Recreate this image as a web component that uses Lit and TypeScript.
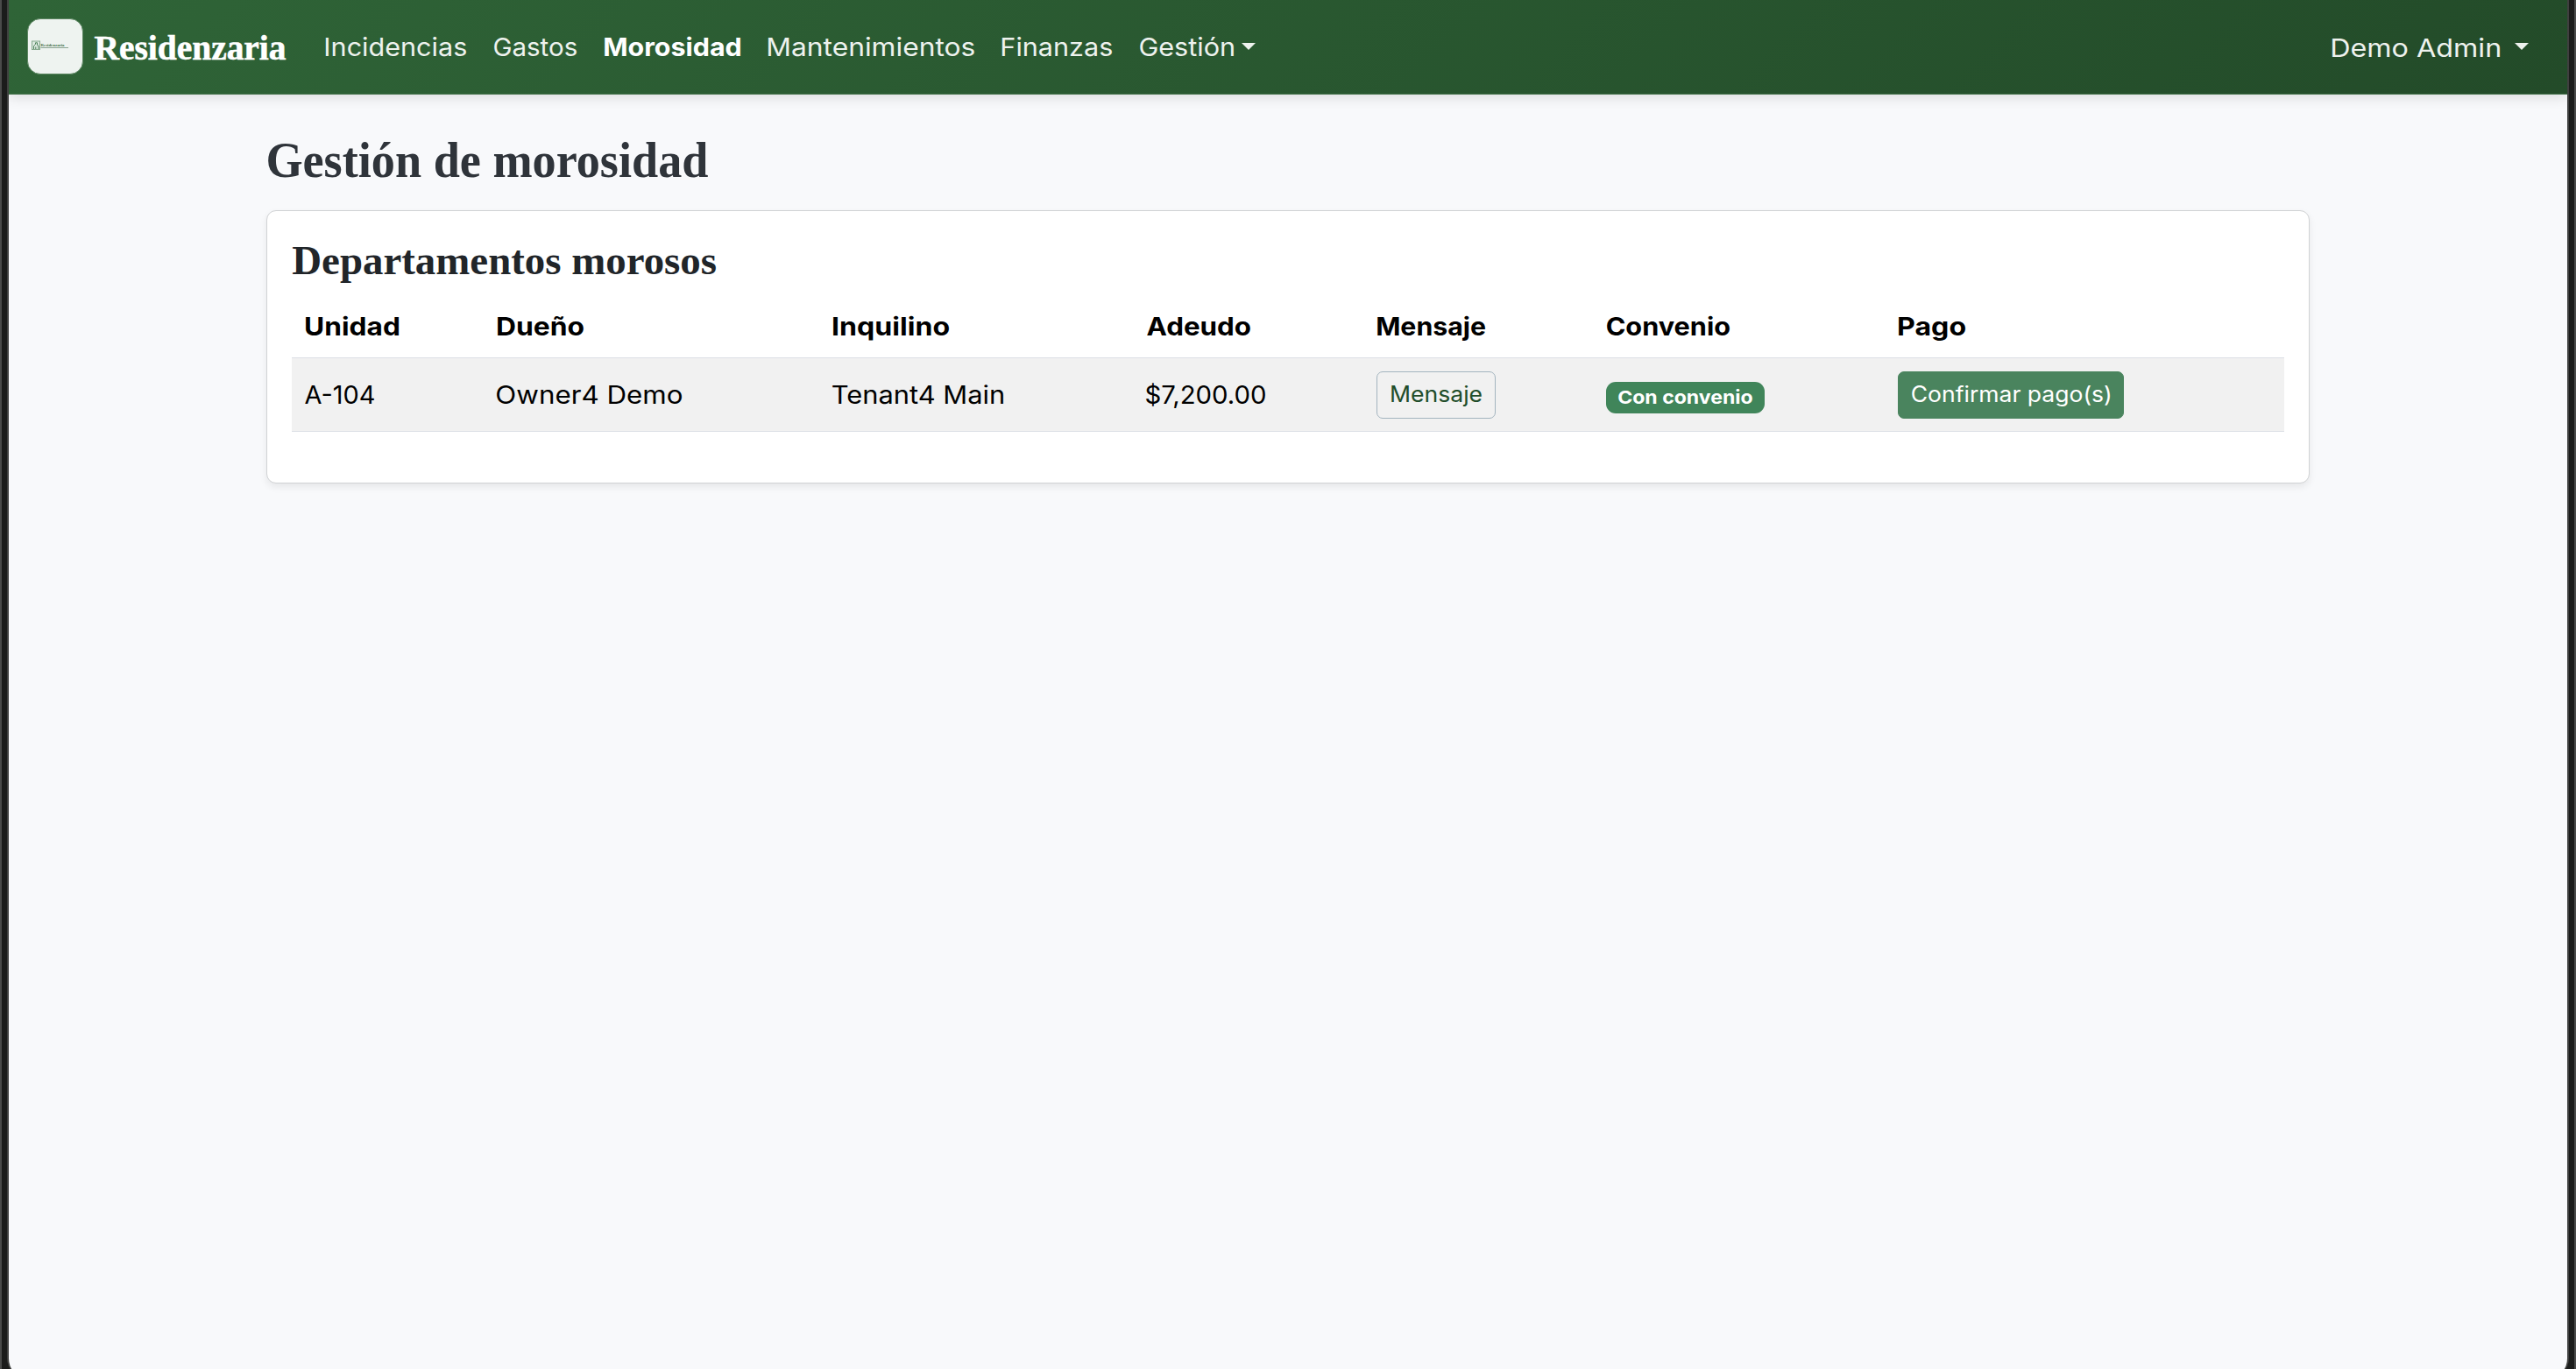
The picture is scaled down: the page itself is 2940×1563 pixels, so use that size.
import { LitElement, html, css, svg } from "lit";
import { customElement, property } from "lit/decorators.js";

const SANS = "Inter, 'Liberation Sans', sans-serif";
const SERIF = "'Liberation Serif', serif";
const pen = document.createElement("canvas").getContext("2d")!;

/** A line of text whose glyphs are stretched to an exact ink width. */
@customElement("fit-label")
export class FitLabel extends LitElement {
  static styles = css`
    :host { display: block; flex: none; }
    svg { display: block; overflow: visible; }
  `;
  @property() text = "";
  @property({ type: Number }) w = 100;
  @property({ type: Number }) size = 29;
  @property({ type: Number }) weight = 400;
  @property({ type: Number }) h = 40;
  @property({ type: Number }) base = 30;
  @property({ type: Number }) stroke = 0;
  @property({ type: Boolean }) serif = false;

  render() {
    const family = this.serif ? SERIF : SANS;
    pen.font = `${this.weight} ${this.size * 4}px ${family}`;
    const m = pen.measureText(this.text);
    const k = this.w / (m.actualBoundingBoxRight + m.actualBoundingBoxLeft);
    return html`<svg width=${this.w} height=${this.h}>
      ${svg`<text x=${m.actualBoundingBoxLeft * k} y=${this.base} fill="currentColor"
        stroke="currentColor" stroke-width=${this.stroke}
        font-family=${family} font-size=${this.size} font-weight=${this.weight}
        textLength=${m.width * k} lengthAdjust="spacingAndGlyphs">${this.text}</text>`}
    </svg>`;
  }
}

const NAV: [string, number, boolean?][] = [
  ["Incidencias", 160],
  ["Gastos", 94],
  ["Morosidad", 155, true],
  ["Mantenimientos", 235],
  ["Finanzas", 125],
  ["Gestión", 107],
];

const HEAD: [string, number][] = [
  ["Unidad", 106],
  ["Dueño", 98],
  ["Inquilino", 132],
  ["Adeudo", 118],
  ["Mensaje", 123],
  ["Convenio", 140],
  ["Pago", 76],
];

const ROW: [string, number][] = [
  ["A-104", 79],
  ["Owner4 Demo", 211],
  ["Tenant4 Main", 195],
  ["$7,200.00", 136],
];

@customElement("app-root")
export class AppRoot extends LitElement {
  static styles = css`
    :host {
      display: block;
      height: 1563px;
      overflow: hidden;
      box-sizing: border-box;
      background: #1b1c1b;
      border: solid #4a4b4a;
      border-width: 0 2px;
      padding: 0 6px;
      font-family: Inter, "Liberation Sans", sans-serif;
    }
    .edge { height: 1573px; border: solid #3f403f; border-width: 0 2px; border-radius: 0 0 22px 22px; overflow: hidden; box-sizing: border-box; background: #f8f9fb; }
    .nav {
      display: flex;
      align-items: center;
      height: 108px;
      box-sizing: border-box;
      padding: 0 44px 0 21px;
      color: #eef2ee;
      background: linear-gradient(135deg, #2f6437 0%, #234b29 100%);
      border-bottom: 1px solid #4a7651;
      box-shadow: 0 4px 14px rgba(0, 0, 0, 0.11);
    }
    .logo {
      width: 64px;
      height: 64px;
      box-sizing: border-box;
      border: 1px solid #5d8763;
      border-radius: 15px;
      background: #eef3f0;
      margin: 0 13px 1px 0;
    }
    .logo svg { display: block; }
    .brand { color: #fff; }
    .links { display: flex; gap: 32px; margin-left: 46px; }
    .active { color: #fff; }
    .menu { display: flex; align-items: center; }
    .caret { border: 8px solid transparent; border-top-color: currentColor; border-bottom: 0; margin: 0 0 2px 9px; }
    .user { margin-left: auto; }
    .user .caret { margin: 0 0 1px 17px; }
    .page { padding: 40px 294px 0; }
    .title { color: #2f343a; margin-left: 2px; }
    .card {
      margin-top: 22px;
      height: 312px;
      box-sizing: border-box;
      padding: 28px;
      border: 1px solid #d0d2d4;
      border-radius: 11px;
      background: #fff;
      box-shadow: 0 4px 8px rgba(0, 0, 0, 0.075);
    }
    .subtitle { color: #212529; margin-left: 1px; }
    .head, .row { display: grid; grid-template-columns: 219px 383px 358px 263px 262px 333px 1fr; color: #000; }
    .head { margin-top: 16px; height: 67px; padding-top: 12px; box-sizing: border-box; }
    .head > * { margin-left: 16px; }
    .row > * { margin-left: 15px; }
    .row { align-items: center; background: #f1f1f1; border: solid #dcdfe5; border-width: 1px 0; padding: 15px 0 14px; }
    .btn { justify-self: start; display: flex; align-items: center; height: 54px; box-sizing: border-box; border-radius: 7px; border: 1px solid #4a845e; padding: 0 15px; background: #4a845e; color: #fff; }
    .outline { background: none; border-color: #a3b4bf; color: #214d2a; padding: 0 15px 0 16px; }
    .badge { justify-self: start; height: 36px; margin-top: 6px; padding: 0 14px; border-radius: 11px; background: #40855a; color: #fff; }
  `;

  render() {
    return html`<div class="edge">
      <nav class="nav">
        <div class="logo">
          <svg width="62" height="62" viewBox="0 0 62 62">
            <rect x="4.5" y="25" width="9" height="9.5" fill="#dbe8df" stroke="#86a98e" stroke-width="1" />
            <path d="M6.5 34V30.5L8.5 28.5V26.8H10.5V29L12 31V34M8.8 34V31.5" fill="none" stroke="#4d8059" stroke-width="1" />
            <text x="14.5" y="31.3" font-family="Liberation Serif, serif" font-weight="700" font-size="5" fill="#3c6f48" textLength="27" lengthAdjust="spacingAndGlyphs">Residenzaria</text>
            <path d="M14.5 32.5H46" stroke="#8aa391" stroke-width="1" />
          </svg>
        </div>
        <fit-label class="brand" serif text="Residenzaria" w="218" size="39.5" weight="700" base="34" stroke="0.6"></fit-label>
        <div class="links">
          ${NAV.map(
            ([t, w, on]) => html`<div class="menu ${on ? "active" : ""}">
              <fit-label text=${t} w=${w} size="28.8" weight=${on ? 700 : 400} base="29.5"></fit-label>
              ${t === "Gestión" ? html`<i class="caret"></i>` : null}
            </div>`
          )}
        </div>
        <div class="menu user">
          <fit-label text="Demo Admin" w="191" size="28.8" base="30.5"></fit-label>
          <i class="caret"></i>
        </div>
      </nav>
      <main class="page">
        <fit-label class="title" serif text="Gestión de morosidad" w="502" size="57" weight="700" h="70" base="54"></fit-label>
        <section class="card">
          <fit-label class="subtitle" serif text="Departamentos morosos" w="483" size="47" weight="700" h="56" base="43.5"></fit-label>
          <div class="head">
            ${HEAD.map(([t, w]) => html`<fit-label text=${t} w=${w} size="28.5" weight="700"></fit-label>`)}
          </div>
          <div class="row">
            ${ROW.map(([t, w]) => html`<fit-label text=${t} w=${w} size="28.5"></fit-label>`)}
            <div class="btn outline"><fit-label text="Mensaje" w="103" size="25" base="28"></fit-label></div>
            <div class="badge"><fit-label text="Con convenio" w="153" size="20.5" weight="700" h="36" base="24.5"></fit-label></div>
            <div class="btn"><fit-label text="Confirmar pago(s)" w="226" size="25" base="28"></fit-label></div>
          </div>
        </section>
      </main>
    </div>`;
  }
}
